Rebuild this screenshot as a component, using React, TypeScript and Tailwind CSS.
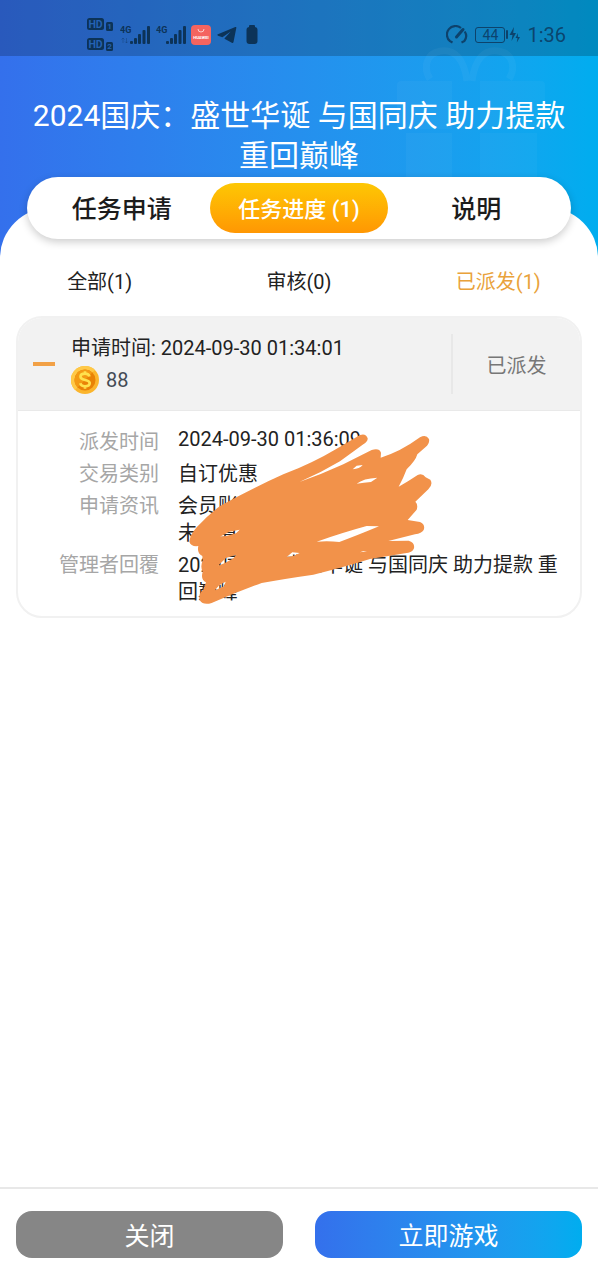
import { useState, type ReactNode } from 'react';

const TITLE = '2024国庆：盛世华诞 与国同庆 助力提款 重回巅峰';

const tabs = [
  { id: 'apply', label: '任务申请' },
  { id: 'progress', label: '任务进度 (1)' },
  { id: 'rules', label: '说明' },
];

const filters = [
  { id: 'all', label: '全部(1)' },
  { id: 'review', label: '审核(0)' },
  { id: 'sent', label: '已派发(1)' },
];

function HdBadge({ sim }: { sim: string }) {
  return (
    <svg viewBox="0 0 27 13" className="h-[13px] w-[27px]" fill="currentColor">
      <rect width="17" height="12" rx="2.5" />
      <text x="8.5" y="10" textAnchor="middle" fontSize="10.5" fontWeight="700" fill="#2462b4">HD</text>
      <rect x="19" y="4" width="7" height="9" rx="1.5" />
      <text x="22.5" y="11.4" textAnchor="middle" fontSize="8" fontWeight="700" fill="#2462b4">{sim}</text>
    </svg>
  );
}

function Signal({ arrows = false }: { arrows?: boolean }) {
  return (
    <svg viewBox="0 0 31 20" className="h-5 w-[31px]" fill="currentColor">
      <text x="0" y="8" fontSize="9" fontWeight="700">4G</text>
      {arrows && (
        <path d="M3 13v5M1.5 14.5 3 13l1.5 1.5M6.5 13v5M5 16.5 6.5 18 8 16.5" stroke="currentColor" strokeWidth="0.8" fill="none" opacity="0.4" />
      )}
      <rect x="10" y="16" width="3" height="3" rx="1" />
      <rect x="14" y="13" width="3" height="6" rx="1" />
      <rect x="18" y="9" width="3" height="10" rx="1" />
      <rect x="22.5" y="5" width="3" height="14" rx="1" />
      <rect x="27" y="1" width="3" height="18" rx="1" />
    </svg>
  );
}

function StatusBar() {
  return (
    <div className="flex h-14 items-center justify-between bg-black/20 pt-[13px] pr-8 pl-[87px] text-[#0c3358]">
      <div className="flex items-center">
        <div className="mr-[6px] flex flex-col gap-[7px]">
          <HdBadge sim="1" />
          <HdBadge sim="2" />
        </div>
        <Signal arrows />
        <div className="ml-[5px]">
          <Signal />
        </div>
        <svg viewBox="0 0 20 20" className="ml-1 h-5 w-5">
          <rect width="20" height="20" rx="4" fill="#f4645f" />
          <path d="M7 4a3 3 0 0 0 6 0" stroke="#fcd0cc" strokeWidth="1" fill="none" />
          <text x="10" y="13.5" textAnchor="middle" fontSize="4.2" fontWeight="700" fill="#fff">HUAWEI</text>
        </svg>
        <svg viewBox="0 0 20 18" className="ml-[6px] h-[18px] w-5" fill="currentColor">
          <path d="M18.3 1 .9 8.3c-.8.4-.7 1.1.1 1.4l4.4 1.5L13.8 5.5 7.6 12.2l-.1.6 7.3 4c.8.5 1.5.2 1.700-.7L19.3 2c.2-.9-.2-1.3-1-1z" />
        </svg>
        <svg viewBox="0 0 12 20" className="ml-[9px] h-5 w-3" fill="currentColor">
          <rect x="3" width="6" height="4" rx="1" />
          <rect x="0.5" y="2" width="11" height="17" rx="3" />
        </svg>
      </div>
      <div className="flex items-center text-[#0c3358]/80">
        <svg viewBox="0 0 22 20" className="mr-[7px] h-5 w-[22px]" fill="none" stroke="currentColor">
          <path d="M6.500 17.500 4 16.200A8.200 8.200 0 0 1 15 3" strokeWidth="2.200" />
          <path d="M18.700 6.500a8.200 8.200 0 0 1-.5 9.700l-2.700 1.300" strokeWidth="2.200" />
          <path d="M10.500 12 17 4.500" strokeWidth="3" strokeLinecap="round" />
        </svg>
        <span className="flex h-4 w-[30px] items-center justify-center rounded-[3px] border border-current text-sm leading-none">44</span>
        <svg viewBox="0 0 16 18" className="h-[18px] w-4" fill="currentColor">
          <rect x="1" y="4" width="2" height="9" rx="1" />
          <path d="M9 1 4.500 9h3L6.500 15l4.500-8H8.200zM13 7l-2.500 5h2l-.7 4.500L15 11h-2.200z" />
        </svg>
        <span className="ml-[6px] text-xl leading-5">1:36</span>
      </div>
    </div>
  );
}

function GiftWatermark() {
  return (
    <svg viewBox="0 0 150 170" className="pointer-events-none absolute top-[46px] right-[51px] h-[170px] w-[150px]" fill="#fff" fillOpacity="0.03">
      <path d="M4 35h51v48H0V39q0-4 4-4zM83 35h61q4 0 4 4v44H83zM9 87h46v83H9zM83 87h57v83H83z" />
      <path d="M70 35C67 12 57 3 44 5 29 7 26 22 33 33M75 35C78 12 88 3 101 5c15 2 18 17 11 28" fill="none" stroke="#fff" strokeOpacity="0.04" strokeWidth="7" />
    </svg>
  );
}

function Coin() {
  return (
    <svg viewBox="0 0 28 28" className="h-7 w-7 shrink-0">
      <circle cx="14" cy="14" r="14" fill="#fbb52d" />
      <path d="M14 0a14 14 0 0 1 10 4L4 24A14 14 0 0 1 14 0z" fill="#ffc947" />
      <circle cx="14" cy="14" r="10.5" fill="#e98206" />
      <path d="M14 3.5A10.5 10.5 0 0 0 6.6 21.4L21.4 6.6A10.5 10.5 0 0 0 14 3.5z" fill="#f39a14" />
      <path d="M18.5 10.5C18 8.5 16.3 7.7 14 7.7c-2.6 0-4.5 1.2-4.5 3.1 0 4.3 9.2 2 9.2 6.3 0 2-2 3.2-4.7 3.2-2.5 0-4.3-1-4.7-3M14 5.2v2.5M14 20.3v2.5" fill="none" stroke="#ffe14d" strokeWidth="2.7" />
    </svg>
  );
}

// Marker strokes hiding the private part of the record
function Redaction() {
  return (
    <svg viewBox="0 0 810 600" className="pointer-events-none absolute top-[9px] left-[152px] h-[200px] w-[270px]">
      <path
        fill="#f2924a"
        fillRule="evenodd"
        d="M58 365Q60 345 80 322Q115 284 150 258Q240 208 340 163Q430 128 500 86L570 45Q588 39 593 55Q594 64 580 73L510 124Q450 160 388 186Q455 163 520 133L605 90Q628 83 633 98L632 113Q690 96 750 52Q768 42 777 57Q780 69 766 82L742 103Q737 122 710 148Q700 175 686 200Q715 184 743 165Q757 158 767 172L781 179Q790 193 775 208L736 245Q745 253 740 269L713 300L750 306Q767 314 761 330Q755 340 735 343L655 363L716 362Q735 367 732 385Q728 398 705 400L600 417Q520 442 430 464Q345 476 275 489Q200 516 125 549Q99 557 89 540Q84 521 100 509L108 487Q91 478 98 456Q90 438 98 422L97 408Q80 400 85 378Q63 381 58 365Z
          M548 148L560 137L578 135Q569 146 548 148Z
          M560 191Q580 175 622 173L603 186Q582 188 560 191Z
          M440 365Q520 337 590 318L627 319Q560 347 508 366Q475 362 440 365Z
          M150 350L178 335L209 329L198 340L172 347Z
          M350 411L367 397L389 399L370 408Z
          M144 437L168 414L199 404L190 415L165 429Z
          M135 511L148 495L167 485L162 499Z
          M570 397L580 393L591 394Z"
      />
    </svg>
  );
}

function DetailRow({ label, children }: { label: string; children: ReactNode }) {
  return (
    <div className="flex gap-[19px]">
      <dt className="w-[125px] shrink-0 text-right text-[#a6a6a6]">{label}</dt>
      <dd className="min-w-0 flex-1">{children}</dd>
    </div>
  );
}

function RecordCard() {
  const [open, setOpen] = useState(true);

  return (
    <article className="mx-4 overflow-hidden rounded-[26px] border-2 border-[#f1f1f1] text-xl text-[#222]">
      <header className="flex items-center border-b border-[#e9e9e9] bg-[#f2f2f2] py-[14px] pl-[15px]">
        <button
          type="button"
          aria-label="展开或收起"
          aria-expanded={open}
          onClick={() => setOpen(!open)}
          className="flex h-8 w-[22px] items-center"
        >
          <span className="h-1 w-full bg-[#f2a146]" />
        </button>
        <div className="ml-4 flex-1 leading-8">
          <p>申请时间: 2024-09-30 01:34:01</p>
          <p className="flex items-center gap-[7px] text-[#444b55]">
            <Coin />
            88
          </p>
        </div>
        <div className="flex h-[60px] w-[129px] items-center justify-center border-l-2 border-[#e8e8e8] pt-1 text-[#777]">
          已派发
        </div>
      </header>
      {open && (
        <div className="relative">
          <dl className="flex flex-col gap-[5px] pt-[18px] pr-4 pb-[10px] pl-4 leading-[27px]">
            <DetailRow label="派发时间">
              <time className="block leading-5">2024-09-30 01:36:09</time>
            </DetailRow>
            <DetailRow label="交易类别">自订优惠</DetailRow>
            <DetailRow label="申请资讯">
              <p>会员账</p>
              <p>未结算</p>
            </DetailRow>
            <DetailRow label="管理者回覆">{TITLE}</DetailRow>
          </dl>
          <Redaction />
        </div>
      )}
    </article>
  );
}

export default function App() {
  const [tab, setTab] = useState('progress');
  const [filter, setFilter] = useState('sent');

  return (
    <div className="relative flex min-h-screen flex-col bg-linear-to-r from-[#3470ec] to-[#00adef] font-[Roboto,'Noto_Sans_CJK_SC',sans-serif]">
      <GiftWatermark />
      <StatusBar />
      <h1 className="px-6 pt-10 pb-8 text-center text-3xl leading-10 font-normal text-white">{TITLE}</h1>

      <main className="relative flex flex-1 flex-col rounded-t-[50px] bg-white">
        <nav className="mx-[27px] -mt-[31px] grid grid-cols-3 rounded-full bg-white p-[6px] shadow-[0_3px_8px_rgba(0,0,0,0.2)]">
          {tabs.map((t) => (
            <button
              key={t.id}
              type="button"
              onClick={() => setTab(t.id)}
              className={
                tab === t.id
                  ? 'h-[50px] rounded-full bg-linear-to-b from-[#fdc704] to-[#ff9703] pt-[2px] text-[22px] font-medium text-white'
                  : 'h-[50px] rounded-full pt-1 text-[25px] font-medium text-[#1c1c1c]'
              }
            >
              {t.label}
            </button>
          ))}
        </nav>

        <div className="grid grid-cols-3 pt-[29px] pb-5 text-xl leading-7">
          {filters.map((f) => (
            <button
              key={f.id}
              type="button"
              onClick={() => setFilter(f.id)}
              className={filter === f.id ? 'text-[#e9a23b]' : 'text-[#222]'}
            >
              {f.label}
            </button>
          ))}
        </div>

        <RecordCard />

        <footer className="mt-auto grid grid-cols-2 gap-8 border-t-2 border-[#e8e8e8] px-4 py-[22px] text-[25px] text-white">
          <button type="button" className="h-[47px] rounded-2xl bg-[#868686] pt-1">关闭</button>
          <button type="button" className="h-[47px] rounded-2xl bg-linear-to-r from-[#3470ec] to-[#00adef] pt-1">立即游戏</button>
        </footer>
      </main>
    </div>
  );
}
